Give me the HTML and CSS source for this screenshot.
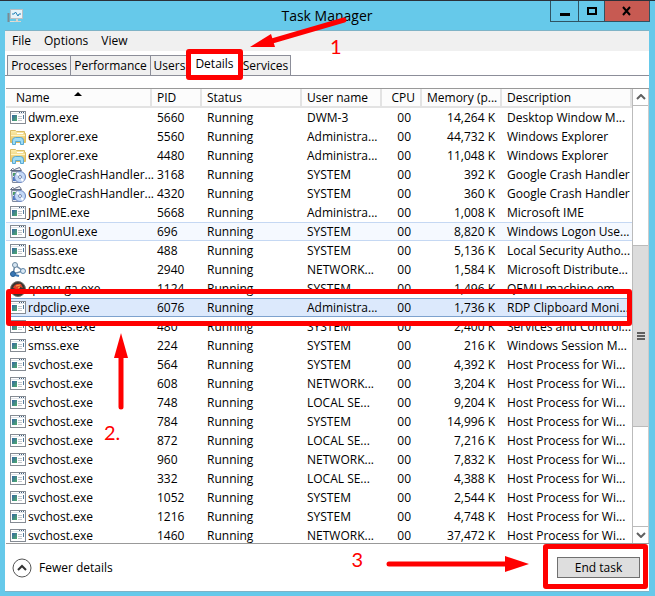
FILE: index.html
```html
<!doctype html>
<html lang="en">
<head>
	<meta charset="UTF-8">
	<meta name="viewport" content="width=device-width, initial-scale=1">
	<title>Task Manager</title>
	<link rel="stylesheet" href="styles.css">
</head>
<body>
<!-- icons used by the process list -->
<svg class="defs" width="0" height="0">
	<defs>
		<linearGradient id="green" x1="0" y1="0" x2="1" y2="1">
			<stop offset="0" stop-color="#3564a4"/>
			<stop offset="1" stop-color="#4fae6b"/>
		</linearGradient>
		<linearGradient id="folder" x1="0" y1="0" x2="0" y2="1">
			<stop offset="0" stop-color="#fbeeb0"/>
			<stop offset="1" stop-color="#e6bd55"/>
		</linearGradient>
	</defs>
	<symbol id="app" viewBox="0 0 16 16">
		<rect x=".5" y="1.500" width="15" height="12" fill="#fff" stroke="#858b93"/>
		<path d="M1 3.500h14" stroke="#dfe3e8"/>
		<path d="M9 2.500h1M11 2.500h1M13 2.500h1" stroke="#42617f"/>
		<rect x="2" y="5" width="5" height="6" fill="url(#green)"/>
		<path d="M8 6.500h4M8 8.500h4M8 10.500h4" stroke="#c3c7cc"/>
		<path d="M13.500 5v4" stroke="#50799a"/>
	</symbol>
	<symbol id="explorer" viewBox="0 0 16 16">
		<path d="M.5 13.500v-12h5l1 1h8v2h1v9z" fill="url(#folder)" stroke="#d9bb66"/>
		<path d="M7 4.500h6" stroke="#fff"/>
		<path d="M1 6.500h14" stroke="#fff4c4"/>
		<path d="M2.500 15.500v-4q0-3 3-3h5q3 0 3 3v4h-3v-3h-5v3z" fill="#9fdcf5" stroke="#5aa9d2"/>
	</symbol>
	<symbol id="setup" viewBox="0 0 16 16">
		<path d="M1.500 4.500h9l-1 11h-7z" fill="#e4e8ef" stroke="#7f899e"/>
		<path d="M.5 3.500l2-2 2 1 5-2 2 3z" fill="#f4f6f9" stroke="#5f6a82"/>
		<path d="M3 6h3v3H3z" fill="#4a9f60"/>
		<path d="M3 14v-4h3v4z" fill="#4b78c9"/>
		<circle cx="10" cy="10" r="5.500" fill="#c3d8f7" stroke="#6d86bd"/>
		<path d="M10 10L6 7l2-2zM10 10l4 3-2 2z" fill="#fff"/>
		<circle cx="10" cy="10" r="1.500" fill="#fff" stroke="#7488b0"/>
	</symbol>
	<symbol id="msdtc" viewBox="0 0 16 16">
		<path d="M5 3L3 12l10-3z" fill="#fff" stroke="#6f8ba6" stroke-width="1.500"/>
		<circle cx="5" cy="3" r="2.500" fill="#d6e5f1" stroke="#6b88a1"/>
		<circle cx="3" cy="12" r="2.500" fill="#3977b5" stroke="#265a8e"/>
		<circle cx="13" cy="9" r="2.500" fill="#dceaf6" stroke="#5f86a8"/>
		<path d="M5 13l4 1" stroke="#3977b5" stroke-width="2"/>
	</symbol>
	<symbol id="qemu" viewBox="0 0 16 16">
		<circle cx="8" cy="8" r="7.500" fill="#3a3531" stroke="#77716b"/>
		<path d="M3 7q2-5 8-4l2 4-3-1-1 3-3-1z" fill="#e2442b"/>
		<path d="M6 5l4-1M8 7l2-1" stroke="#f5b04a"/>
		<path d="M3 11h3M9 12h4" stroke="#d8d8d8" stroke-width="2"/>
	</symbol>
</svg>

<div class="window">
	<header class="titlebar">
		<svg class="logo" width="16" height="16" viewBox="0 0 16 16">
			<rect x="3.500" y="1.500" width="12" height="9" fill="#e9f4fa" stroke="#b9bfc3"/>
			<path d="M5 6h2l1.500-2L11 8l1-2h2" fill="none" stroke="#2583b8"/>
			<path d="M9 11h2v2h3v1H7v-1h2z" fill="#d9d5cc"/>
			<path d="M1.500 5v9" stroke="#7b8b92" stroke-width="2"/>
			<path d="M3 13.500h4" stroke="#e3ded4"/>
		</svg>
		<h1>Task Manager</h1>
		<div class="controls">
			<button type="button" aria-label="Minimize"><svg width="10" height="10" viewBox="0 0 10 10"><path d="M0 7h10v3H0z"/></svg></button>
			<button type="button" aria-label="Maximize"><svg width="10" height="10" viewBox="0 0 10 10"><path d="M1 2h8v6H1z" fill="none" stroke="#000" stroke-width="2"/></svg></button>
			<button type="button" class="close" aria-label="Close"><svg width="10" height="10" viewBox="0 0 10 10"><path d="M1 1l7 8M8 1L1 9" stroke="#000" stroke-width="2"/></svg></button>
		</div>
	</header>

	<main class="client">
		<nav class="menu">
			<a href="#">File</a>
			<a href="#">Options</a>
			<a href="#">View</a>
		</nav>

		<div class="tabs" role="tablist">
			<button type="button" role="tab" class="processes">Processes</button>
			<button type="button" role="tab" class="performance">Performance</button>
			<button type="button" role="tab" class="users">Users</button>
			<button type="button" role="tab" class="active" aria-selected="true">Details<span class="mark"></span></button>
			<button type="button" role="tab" class="services">Services</button>
		</div>

		<section class="list">
			<div class="rows">
				<table>
					<colgroup>
						<col class="c-name"><col class="c-pid"><col class="c-status"><col class="c-user"><col class="c-cpu"><col class="c-mem"><col>
					</colgroup>
					<thead>
						<tr><th>Name<i class="sort"></i></th><th>PID</th><th>Status</th><th>User name</th><th>CPU</th><th>Memory (p...</th><th>Description</th></tr>
					</thead>
					<tbody>
						<tr><td><svg><use href="#app"/></svg>dwm.exe</td><td>5660</td><td>Running</td><td>DWM-3</td><td>00</td><td>14,264 K</td><td>Desktop Window M...</td></tr>
						<tr><td><svg><use href="#explorer"/></svg>explorer.exe</td><td>5560</td><td>Running</td><td>Administra...</td><td>00</td><td>44,732 K</td><td>Windows Explorer</td></tr>
						<tr><td><svg><use href="#explorer"/></svg>explorer.exe</td><td>4480</td><td>Running</td><td>Administra...</td><td>00</td><td>11,048 K</td><td>Windows Explorer</td></tr>
						<tr><td><svg><use href="#setup"/></svg>GoogleCrashHandler...</td><td>3168</td><td>Running</td><td>SYSTEM</td><td>00</td><td>392 K</td><td>Google Crash Handler</td></tr>
						<tr><td><svg><use href="#setup"/></svg>GoogleCrashHandler...</td><td>4320</td><td>Running</td><td>SYSTEM</td><td>00</td><td>360 K</td><td>Google Crash Handler</td></tr>
						<tr><td><svg><use href="#app"/></svg>JpnIME.exe</td><td>5668</td><td>Running</td><td>Administra...</td><td>00</td><td>1,008 K</td><td>Microsoft IME</td></tr>
						<tr class="hover"><td><svg><use href="#app"/></svg>LogonUI.exe</td><td>696</td><td>Running</td><td>SYSTEM</td><td>00</td><td>8,820 K</td><td>Windows Logon Use...</td></tr>
						<tr><td><svg><use href="#app"/></svg>lsass.exe</td><td>488</td><td>Running</td><td>SYSTEM</td><td>00</td><td>5,136 K</td><td>Local Security Autho...</td></tr>
						<tr><td><svg><use href="#msdtc"/></svg>msdtc.exe</td><td>2940</td><td>Running</td><td>NETWORK...</td><td>00</td><td>1,584 K</td><td>Microsoft Distribute...</td></tr>
						<tr><td><svg><use href="#qemu"/></svg>qemu-ga.exe</td><td>1124</td><td>Running</td><td>SYSTEM</td><td>00</td><td>1,496 K</td><td>QEMU machine em...</td></tr>
						<tr class="selected"><td><svg><use href="#app"/></svg>rdpclip.exe<span class="mark"></span></td><td>6076</td><td>Running</td><td>Administra...</td><td>00</td><td>1,736 K</td><td>RDP Clipboard Moni...</td></tr>
						<tr><td><svg><use href="#app"/></svg>services.exe</td><td>480</td><td>Running</td><td>SYSTEM</td><td>00</td><td>2,400 K</td><td>Services and Control...</td></tr>
						<tr><td><svg><use href="#app"/></svg>smss.exe</td><td>224</td><td>Running</td><td>SYSTEM</td><td>00</td><td>216 K</td><td>Windows Session M...</td></tr>
						<tr><td><svg><use href="#app"/></svg>svchost.exe</td><td>564</td><td>Running</td><td>SYSTEM</td><td>00</td><td>4,392 K</td><td>Host Process for Wi...</td></tr>
						<tr><td><svg><use href="#app"/></svg>svchost.exe</td><td>608</td><td>Running</td><td>NETWORK...</td><td>00</td><td>3,204 K</td><td>Host Process for Wi...</td></tr>
						<tr><td><svg><use href="#app"/></svg>svchost.exe</td><td>748</td><td>Running</td><td>LOCAL SE...</td><td>00</td><td>9,204 K</td><td>Host Process for Wi...</td></tr>
						<tr><td><svg><use href="#app"/></svg>svchost.exe</td><td>784</td><td>Running</td><td>SYSTEM</td><td>00</td><td>14,996 K</td><td>Host Process for Wi...</td></tr>
						<tr><td><svg><use href="#app"/></svg>svchost.exe</td><td>872</td><td>Running</td><td>LOCAL SE...</td><td>00</td><td>7,216 K</td><td>Host Process for Wi...</td></tr>
						<tr><td><svg><use href="#app"/></svg>svchost.exe</td><td>960</td><td>Running</td><td>NETWORK...</td><td>00</td><td>7,832 K</td><td>Host Process for Wi...</td></tr>
						<tr><td><svg><use href="#app"/></svg>svchost.exe</td><td>332</td><td>Running</td><td>LOCAL SE...</td><td>00</td><td>4,388 K</td><td>Host Process for Wi...</td></tr>
						<tr><td><svg><use href="#app"/></svg>svchost.exe</td><td>1052</td><td>Running</td><td>SYSTEM</td><td>00</td><td>2,544 K</td><td>Host Process for Wi...</td></tr>
						<tr><td><svg><use href="#app"/></svg>svchost.exe</td><td>1216</td><td>Running</td><td>SYSTEM</td><td>00</td><td>4,748 K</td><td>Host Process for Wi...</td></tr>
						<tr><td><svg><use href="#app"/></svg>svchost.exe</td><td>1460</td><td>Running</td><td>NETWORK...</td><td>00</td><td>37,472 K</td><td>Host Process for Wi...</td></tr>
					</tbody>
				</table>
			</div>
			<div class="scroll">
				<button type="button" aria-label="Scroll up"><svg width="10" height="6" viewBox="0 0 10 6"><path d="M1 5l4-4 4 4"/></svg></button>
				<div class="track"><div class="thumb"><svg width="8" height="8" viewBox="0 0 8 8"><path d="M0 1h8M0 4h8M0 7h8"/></svg></div></div>
				<button type="button" aria-label="Scroll down"><svg width="10" height="6" viewBox="0 0 10 6"><path d="M1 1l4 4 4-4"/></svg></button>
			</div>
		</section>

		<footer class="footer">
			<button type="button" class="fewer">
				<svg width="20" height="20" viewBox="0 0 20 20"><circle cx="10" cy="10" r="9" fill="#fff" stroke="#555"/><path d="M6 12l4-4 4 4" fill="none" stroke="#333" stroke-width="2"/></svg>
				Fewer details
			</button>
			<div class="end">
				<button type="button">End task</button>
				<span class="mark"></span>
				<span class="step step3">3</span>
				<svg class="arrow arrow3" width="144" height="20" viewBox="0 0 144 20"><path d="M3 10h116" stroke-width="5"/><path class="head" d="M119 2l24 8-24 8z"/></svg>
			</div>
		</footer>
	</main>

	<!-- steps 1 and 2 -->
	<svg class="arrow arrow1" width="102" height="34" viewBox="0 0 102 34"><path d="M96 4L24 25" stroke-width="5"/><path class="head" d="M2 31L23 18l4 13z"/></svg>
	<span class="step step1">1</span>
	<svg class="arrow arrow2" width="16" height="78" viewBox="0 0 16 78"><path d="M8 74V22" stroke-width="5"/><path class="head" d="M8 0l7 25H1z"/></svg>
	<span class="step step2">2.</span>
</div>
</body>
</html>
```
FILE: styles.css
```css
*{box-sizing:border-box}
body{
	margin:0;
	font:12px/18px "Open Sans","Noto Sans",sans-serif;
	color:#000;
}
button{
	font:inherit;
	color:inherit;
	padding:0;
	margin:0;
	border:0;
	background:none;
}
.defs{position:absolute}
.window{
	position:relative;
	display:flex;
	flex-direction:column;
	height:100vh;
	padding:0 6px 4px 5px;
	border-top:1px solid #2b3038;
	background:#66c9ea;
	overflow:hidden;
}

/*title bar*/
.titlebar{
	display:grid;
	grid-template-columns:100px 1fr 100px;
	height:29px;
}
.logo{margin:7px 0 0 2px}
.titlebar h1{
	margin:0;
	font-size:14px;
	line-height:30px;
	font-weight:normal;
	text-align:center;
}
.controls{
	display:flex;
	height:21px;
	margin:0 -1px 0 1px;
	border:1px solid #2f5362;
	border-top:0;
}
.controls button{
	display:flex;
	align-items:center;
	justify-content:center;
	width:28px;
	border-right:1px solid #2f5362;
}
.controls button+button{width:26px}
.controls .close{
	flex:1;
	border:0;
	background:#c75a52;
}

.client{
	flex:1;
	min-height:0;
	display:flex;
	flex-direction:column;
	border-top:1px solid #7fb3c6;
	border-bottom:1px solid #7fb3c6;
	background:#fff;
}
.menu{
	display:flex;
	gap:13px;
	height:20px;
	padding-left:7px;
	background:#f0f0f0;
}
.menu a{
	color:#000;
	line-height:20px;
	text-decoration:none;
}

/*tabs*/
.tabs{
	display:flex;
	align-items:flex-end;
	height:25px;
	padding-left:2px;
	border-bottom:1px solid #8c8e99;
}
.tabs button{
	height:20px;
	margin-right:-1px;
	border:1px solid #8c8e99;
	border-bottom:0;
	background:#f0f0f0;
}
.tabs .processes{width:64px}
.tabs .performance{width:81px}
.tabs .users{width:39px}
.tabs .services{width:51px}
.tabs .active{
	position:relative;
	z-index:2;
	width:53px;
	height:24px;
	background:#fff;
}
.mark{
	position:absolute;
	z-index:3;
	border:5px solid #f00;
	border-radius:3px;
	pointer-events:none;
}
.tabs .mark{inset:-3px -3px -5px -3px}

/*process list*/
.list{
	flex:1;
	min-height:0;
	display:flex;
	margin:12px 0 0 1px;
	border-top:1px solid #999;
	border-bottom:1px solid #999;
}
.rows{
	flex:1;
	min-width:0;
	overflow:hidden;
}
table{
	width:100%;
	table-layout:fixed;
	border-spacing:0;
}
.c-name{width:146px}
.c-pid{width:50px}
.c-status{width:100px}
.c-user,.c-mem{width:80px}
.c-cpu{width:40px}
th,td{
	height:19px;
	padding:1px 0 0 5px;
	line-height:16px;
	font-weight:normal;
	text-align:left;
	white-space:nowrap;
}
th{
	border-right:2px solid #e3e3e3;
	border-bottom:2px solid #e3e3e3;
	background:#fcfcfc;
}
th:first-child{padding-left:10px}
td:first-child{padding-left:4px}
th:nth-child(5),th:nth-child(6){
	padding-right:5px;
	text-align:right;
}
td:nth-child(5){padding-right:11px;text-align:right}
td:nth-child(6){padding-right:7px;text-align:right}
td svg{
	width:16px;
	height:16px;
	margin-right:2px;
	vertical-align:top;
}
.sort{
	float:right;
	margin:2px 68px 0 0;
	border:4px solid transparent;
	border-top:0;
	border-bottom-color:#000;
}
.hover td{
	border-top:1px solid #c5d8f3;
	border-bottom:1px solid #c5d8f3;
	background:#f5f9ff;
}
.selected{position:relative}
.selected td{
	border-top:1px solid #7da2ce;
	border-bottom:1px solid #7da2ce;
	background:#dce9fc;
}
.selected .mark{inset:-9px 0 -9px 0}

.scroll{
	display:flex;
	flex-direction:column;
	width:17px;
	border-left:1px solid #bbb;
	border-right:1px solid #ccc;
	background:#fff;
}
.scroll button{
	display:flex;
	align-items:center;
	justify-content:center;
	height:17px;
	border-bottom:1px solid #bbb;
}
.scroll .track+button{
	border-top:1px solid #bbb;
	border-bottom:0;
}
.scroll path{
	fill:none;
	stroke:#606060;
	stroke-width:2;
}
.track{
	flex:1;
	display:flex;
	flex-direction:column;
	justify-content:flex-end;
	padding-bottom:99px;
}
.thumb{
	display:flex;
	align-items:center;
	justify-content:center;
	height:182px;
	border-top:1px solid #bbb;
	border-bottom:1px solid #bbb;
	background:#dcdcdc;
}

.footer{
	display:flex;
	align-items:center;
	justify-content:space-between;
	height:47px;
	padding:0 9px 0 7px;
}
.fewer{
	display:flex;
	align-items:center;
	gap:7px;
}
.end{position:relative}
.end button{
	display:block;
	width:83px;
	height:21px;
	border:1px solid #707070;
	background:#dedede;
}
.end .mark{inset:-13px -8px -11px -14px}

/*step numbers and arrows*/
.step{
	position:absolute;
	z-index:4;
	font:20px/24px Lato,sans-serif;
	color:#f00;
}
.arrow{
	position:absolute;
	z-index:4;
	fill:none;
	stroke:#f00;
	stroke-linecap:round;
}
.arrow .head{fill:#f00;stroke:none}
.arrow1{left:248px;top:15px}
.step1{left:330px;top:33px}
.arrow2{left:113px;top:332px}
.step2{left:104px;top:419px}
.arrow3{right:110px;top:-3px}
.step3{right:277px;top:-10px}
```
